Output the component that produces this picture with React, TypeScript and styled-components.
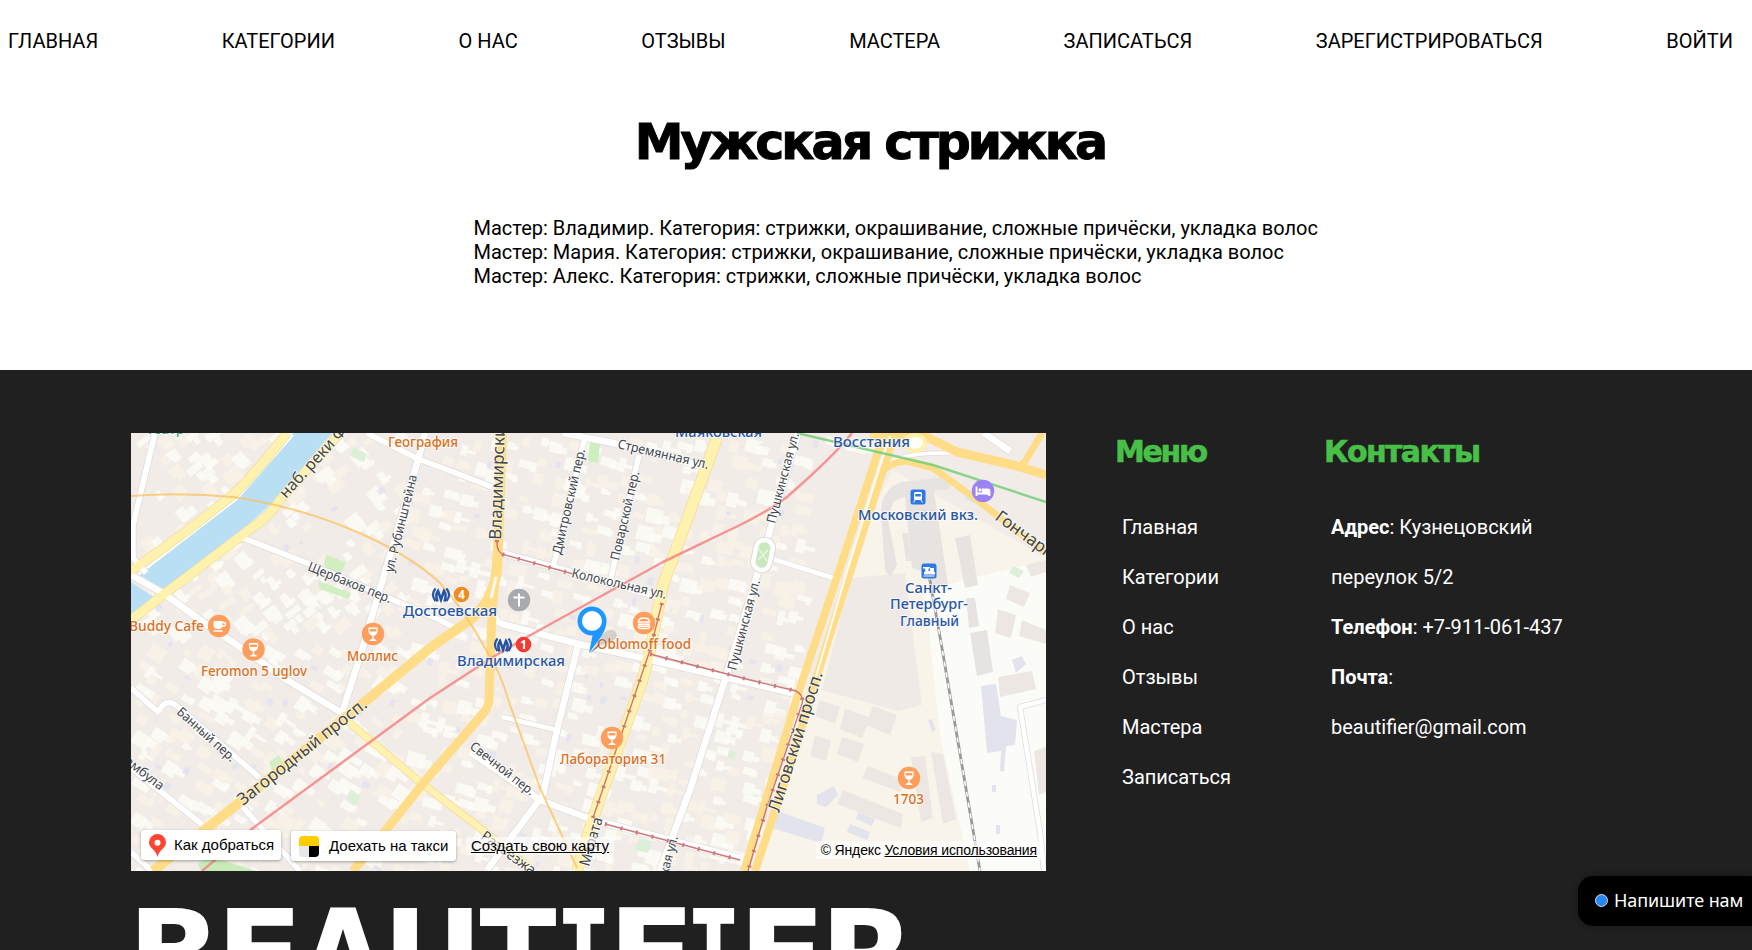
import React from "react";
import styled, { createGlobalStyle } from "styled-components";

const GlobalStyle = createGlobalStyle`
  * { box-sizing: border-box; }
  html, body { margin: 0; padding: 0; }
  body { background: #fff; color: #000; font: 20px/24px Roboto, "Liberation Sans", sans-serif; }
  h1, h2, p, ul { margin: 0; padding: 0; font-weight: inherit; }
  ul { list-style: none; }
  a { color: inherit; text-decoration: none; }
`;

const Page = styled.div`
  height: 950px;
  overflow: hidden;
  display: flex;
  flex-direction: column;
`;

const Nav = styled.nav`
  display: flex;
  justify-content: space-between;
  padding: 29px 19px 0 8px;
  height: 113px;
  flex: none;
  white-space: nowrap;
`;

const Title = styled.h1`
  font-family: "DejaVu Sans", sans-serif;
  font-weight: 700;
  font-size: 49px;
  line-height: 60px;
  letter-spacing: -3px;
  -webkit-text-stroke: 1px #000;
  height: 103px;
  flex: none;
  text-align: center;
  white-space: nowrap;
  padding-right: 12px;
`;

const Masters = styled.ul`
  height: 154px;
  flex: none;
  padding-left: 473.5px;
  white-space: nowrap;
`;

const Footer = styled.footer`
  flex: 1;
  min-height: 0;
  background: #202020;
  color: #fff;
  padding: 63px 131px 0;
`;

const FooterTop = styled.div`
  display: flex;
  align-items: flex-start;
`;

const MapFrame = styled.div`
  position: relative;
  width: 915px;
  height: 438px;
  overflow: hidden;
  flex: none;
  svg { display: block; }
`;

const Column = styled.section<{ $left: number; $width: number }>`
  margin-left: ${(p) => p.$left}px;
  width: ${(p) => p.$width}px;
  flex: none;
`;

const ColumnTitle = styled.h2<{ $spacing: number }>`
  font: 700 30px/38px "DejaVu Sans", sans-serif;
  letter-spacing: ${(p) => p.$spacing}px;
  -webkit-text-stroke: 0.6px #48c048;
  color: #48c048;
  white-space: nowrap;
`;

const ColumnList = styled.ul`
  padding: 31px 0 0 7px;
  line-height: 50px;
  white-space: nowrap;
`;

const Brand = styled.div`
  display: flex;
  margin-top: 13px;
  font: 700 124px/144px "DejaVu Sans", sans-serif;
`;

const BrandLetter = styled.span<{ $w: number; $stretch: number; $slab?: boolean }>`
  width: ${(p) => p.$w}px;
  flex: none;
  display: flex;
  justify-content: center;
  font-family: ${(p) => (p.$slab ? '"DejaVu Sans Mono"' : '"DejaVu Sans"')}, sans-serif;
  transform: scaleX(${(p) => p.$stretch});
`;

const MapBar = styled.div`
  position: absolute;
  left: 10px;
  right: 5px;
  top: 397px;
  display: flex;
  align-items: flex-start;
  color: #000;
  font: 15px/18px "Liberation Sans", Arial, sans-serif;
  white-space: nowrap;
`;

const MapButton = styled.button<{ $w: number; $gap: number; $top: number }>`
  display: flex;
  align-items: center;
  gap: ${(p) => p.$gap}px;
  width: ${(p) => p.$w}px;
  height: 30px;
  margin: ${(p) => p.$top}px 10px 0 0;
  padding: 0 0 0 8px;
  border: 0;
  border-radius: 3px;
  background: #fff;
  color: #000;
  font: inherit;
  box-shadow: 0 1px 3px rgba(0, 0, 0, 0.35);
`;

const MapLink = styled.a`
  && { text-decoration: underline; }
  margin-top: 7px;
  background: rgba(255, 255, 255, 0.6);
  border-radius: 3px;
  padding: 0 5px;
`;

const Copyright = styled.div`
  margin-left: auto;
  margin-top: 11px;
  padding: 0 4px 0 5px;
  font-size: 14px;
  letter-spacing: -0.14px;
  background: rgba(255, 255, 255, 0.7);
  border-radius: 3px;
  a { text-decoration: underline; }
`;

const Chat = styled.button`
  position: absolute;
  left: 1578px;
  top: 876px;
  width: 174px;
  height: 50px;
  display: flex;
  align-items: center;
  gap: 6px;
  padding: 0 0 2px 17px;
  border: 0;
  border-radius: 15px 0 0 15px;
  background: #000;
  color: #fff;
  font: 18px/24px "Noto Sans", sans-serif;
  letter-spacing: -0.1px;
  box-shadow: 0 0 8px rgba(0, 0, 0, 0.3);
  white-space: nowrap;
`;

const Dot = styled.span`
  width: 13px;
  height: 13px;
  border-radius: 50%;
  border: 1px solid #d8d8d8;
  background: #2787f5;
  flex: none;
`;

const NAV = ["ГЛАВНАЯ", "КАТЕГОРИИ", "О НАС", "ОТЗЫВЫ", "МАСТЕРА", "ЗАПИСАТЬСЯ", "ЗАРЕГИСТРИРОВАТЬСЯ", "ВОЙТИ"];
const MENU = ["Главная", "Категории", "О нас", "Отзывы", "Мастера", "Записаться"];
const MASTERS = [
  "Мастер: Владимир. Категория: стрижки, окрашивание, сложные причёски, укладка волос",
  "Мастер: Мария. Категория: стрижки, окрашивание, сложные причёски, укладка волос",
  "Мастер: Алекс. Категория: стрижки, сложные причёски, укладка волос",
];
/* letter, box width, horizontal stretch, slab serif */
const BRAND: [string, number, number, boolean?][] = [
  ["B", 86, 0.98], ["E", 85, 1.04], ["A", 82, 0.9], ["U", 97, 1], ["T", 74, 0.91],
  ["I", 57, 0.76, true], ["F", 79, 1.04], ["I", 45, 0.76, true], ["E", 92, 1.04], ["R", 79, 1],
];

/* Small building footprints and courtyards, laid out along the street grid. */
type Block = { x: number; y: number; w: number; h: number; r: number; c: string };
const BLOCKS: Block[] = (() => {
  let s = 17;
  const rnd = () => ((s = (s * 16807) % 2147483647) / 2147483647);
  const out: Block[] = [];
  for (let y = 436; y < 872; y += 17) {
    for (let x = 134; x < 890; x += 16) {
      const k = rnd();
      const px = x + rnd() * 9;
      const py = y + rnd() * 9;
      if (px > 800 && py > 450 && py < 720) continue;
      const r = px < 400 ? (py < 640 ? -38 : 33) : 14;
      const c = k < 0.38 ? "#fbfbf6" : k < 0.74 ? "#f8f2e6" : k < 0.81 ? "#e3e3ee" : "#f0ebe8";
      const small = k >= 0.74;
      const w = small ? 3 + rnd() * 5 : 6 + rnd() * 12;
      const h = small ? 3 + rnd() * 5 : 5 + rnd() * 10;
      out.push({ x: px, y: py, w, h, r, c });
      if (k < 0.5) out.push({ x: px + w * 0.6, y: py + h * 0.5, w: h * 0.9, h: w * 0.5, r, c });
    }
  }
  return out;
})();

const WHITE: [string, number][] = [
  ["M131 575L163 593L203 622L240 647L287 680L342 713", 7],
  ["M243 538L307 563L440 620L455 628", 6],
  ["M425 433L418 460L362 650L342 713", 7],
  ["M367 433L418 459L440 467L492 487", 6],
  ["M155 433L133 525L133 558L146 573", 6],
  ["M563 433L613 443L710 468", 7],
  ["M585 437L553 568", 6],
  ["M639 455L610 582", 6],
  ["M502 553L663 598", 7],
  ["M493 600Q493 621 502 624L583 645L643 658L750 683L800 695", 7],
  ["M578 645L557 730L543 795L487 870", 7],
  ["M502 717L557 730", 5],
  ["M470 752L540 800L593 820L740 858", 7],
  ["M798 433L757 575L725 680L690 790L660 870", 7],
  ["M770 558L833 578", 5],
  ["M1046 700L1020 707L1040 832L1044 871", 5],
  ["M131 688L158 712L164 704Q170 700 178 707L260 778", 6],
  ["M240 804L300 871", 6],
  ["M131 768L203 825", 6],
  ["M131 852L152 871", 6],
  ["M984 433L1010 451", 7],
  ["M890 462Q910 452 950 453", 4],
];
const YELLOW: [string, number][] = [
  ["M287 433Q260 468 235 493Q190 530 131 571", 9],
  ["M340 433L280 500Q268 518 253 527L163 595L131 620", 9],
  ["M717 438L663 585L650 650L643 678L593 818L577 871", 11],
  ["M345 719L420 782L480 828L530 868", 7],
];
const ORANGE: [string, number][] = [
  ["M502 433L498 548L497 572Q491 603 470 620L430 648L367 700L240 802L153 871", 10],
  ["M498 548L492 612L489 700Q489 708 480 717L430 775L353 871", 9],
  ["M887 433L878 452L840 568L800 688L744 871", 8],
  ["M894 433L887 458L862 535L825 650L787 775L755 871", 8],
  ["M870 436L927 437L957 452L1013 465L1046 475", 9],
  ["M1020 466L1026 460L1042 433", 7],
  ["M878 477Q887 462 907 461L933 468L973 497L1046 553", 7],
];
const TRAM = [
  "M497 540Q496 553 505 555L573 574",
  "M662 603L650 650L593 818M650 654L750 680L796 691Q804 695 802 704L766 810L748 871",
  "M605 824L740 860",
];

const GRAY = "#41474d";
const BLUE = "#2857a6";
const BROWN = "#d9711f";
type Label = [string, number, number, number, string, number, number?];
const LABELS: Label[] = [
  ["Театр", 146, 434, 14, "#3aa88e", 0],
  ["География", 388, 447, 14, BROWN, 0, 70],
  ["наб. реки Фонтанки", 286, 499, 16, GRAY, -47.5],
  ["ул. Рубинштейна", 393, 573, 13, GRAY, -76, 100],
  ["Щербаков пер.", 307, 570, 13, GRAY, 22, 89],
  ["Владимирский", 501, 540, 17, GRAY, -88],
  ["Дмитровский пер.", 561, 555, 13, GRAY, -77, 108],
  ["Поварской пер.", 619, 561, 13, GRAY, -77, 91],
  ["Стремянная ул.", 617, 448, 13, GRAY, 13, 93],
  ["Колокольная ул.", 571, 577, 13, GRAY, 13, 97],
  ["Пушкинская ул.", 775, 524, 13, GRAY, -75, 93],
  ["Пушкинская ул.", 736, 671, 13, GRAY, -75, 93],
  ["Пушкинская ул.", 654, 927, 13, GRAY, -75, 93],
  ["Маяковская", 675, 437, 14, BLUE, 0, 87],
  ["Восстания", 833, 447, 14, BLUE, 0, 77],
  ["Московский вкз.", 858, 519.5, 14, BLUE, 0, 120],
  ["Санкт-", 905, 593, 14, BLUE, 0, 47],
  ["Петербург-", 890, 609, 14, BLUE, 0, 78],
  ["Главный", 900, 625.5, 14, BLUE, 0, 59],
  ["Гончарная", 994, 519, 17, GRAY, 36],
  ["Достоевская", 403, 615.5, 14, BLUE, 0, 94],
  ["Владимирская", 457, 665.5, 14, BLUE, 0, 108],
  ["Buddy Cafe", 129, 630.5, 14, BROWN, 0, 75],
  ["Feromon 5 uglov", 201, 675.5, 14, BROWN, 0, 106],
  ["Моллис", 347, 660.5, 14, BROWN, 0, 51],
  ["Oblomoff food", 597, 649, 14, BROWN, 0, 94],
  ["Лаборатория 31", 560, 763.5, 14, BROWN, 0, 106],
  ["1703", 893, 804, 14, BROWN, 0, 31],
  ["Банный пер.", 176, 713, 13, GRAY, 42, 74],
  ["Джамбула", 109, 751, 13, GRAY, 38],
  ["Загородный просп.", 243, 806, 17, GRAY, -38.5, 160],
  ["Свечной пер.", 469, 748, 13, GRAY, 38, 78],
  ["Разъезжая ул.", 480, 838, 14, GRAY, 36],
  ["Марата", 589, 867, 15, GRAY, -74, 50],
  ["Лиговский просп.", 779, 813, 17, GRAY, -72.5, 146],
];

const Glass = () => (
  <g fill="#fff">
    <path d="M-4.500-6.500h9q1 7.500-3.800 8.200V4.800L3.400 6v1h-6.800V6L-.7 4.800V1.700Q-5.500 1-4.500-6.500z" />
    <path d="M-3.300-5h6.600l.1 2.500h-6.800z" fill="#fe9e5c" />
  </g>
);
const Cup = () => (
  <g fill="none" stroke="#fff">
    <path d="M-5-4.500h8v4q0 3-3 3h-2q-3 0-3-3z" fill="#fff" />
    <path d="M3-3.500h1.500q2 0 2 1.800T4.300 0H3" strokeWidth="1.300" />
    <path d="M-5.500 5h9" strokeWidth="1.500" />
  </g>
);
const Burger = () => (
  <g fill="none" stroke="#fff" strokeWidth="1.500">
    <path d="M-5.500-1q0-4 5.500-4t5.500 4z" />
    <path d="M-6 1.300h12M-5.500 3.200q0 2.300 2 2.300h7q2 0 2-2.300z" />
  </g>
);
const Metro = () => (
  <g fill="none" stroke="#2354a5">
    <path d="M-5.500-6.500q-5 6 0 12.500M5.500-6.500q5 6 0 12.500" strokeWidth="2.200" />
    <path d="M-3.500 6.500q-2.500-6.500.5-10.500L0 4.500l3-8.500q3 4 .5 10.500" strokeWidth="2.600" />
  </g>
);

const CityMap = () => (
  <svg width="915" height="438" viewBox="131 433 915 438" fontFamily='"Noto Sans", sans-serif'>
    <rect x="131" y="433" width="915" height="438" fill="#f1ece8" />
    {BLOCKS.map((b, i) => (
      <rect key={i} x={b.x} y={b.y} width={b.w} height={b.h} fill={b.c} opacity="0.85" transform={`rotate(${b.r} ${b.x} ${b.y})`} />
    ))}
    <path d="M892 470L1046 558V871H752L830 645L870 520z" fill="#f9f4e9" />
    <path d="M850 578L905 573L922 705L898 711L822 690L835 640z" fill="#efeae6" />
    <path d="M925 590L1046 560V871H970L940 735z" fill="#fbfcf7" />
    <g fill="#e7e3e0">
      <path d="M881 512Q882 487 903 482L945 477L953 482L947 490L934 490L948 585L931 585L928 573L912 568L905 497L893 502L888 520L897 565L890 577L885 570z" />
      <path d="M955 538L970 535L978 585L965 588z" />
      <path d="M966 598L975 598L979 626L969 628zM970 633L987 630L993 672L977 676z" />
      <path d="M902 533h6l4 28h-6z" />
    </g>
    <g fill="#ede7e4">
      <path d="M1010 585l20 8-6 14-18-8zM998 609l18 6-5 23-16-5zM1022 620l24 10v14l-27-8zM1026 565l20-5v12l-15 5zM998 677l34-6 4 18-36 8z" />
      <path d="M931 752l12 2 13 65-13 5zM911 757l14-1 8 62-12 4zM868 766l35 14-2 12-39-14zM843 790l60 24-2 14-64-24z" />
      <path d="M820 700l20 7-5 17-20-8zM845 708l25 10-8 20-22-9zM873 706l24 9-7 20-24-10zM815 735l16 6-5 20-16-5zM842 737l22 7-6 18-21-8zM1034 751l12-4v45l-7 3z" />
    </g>
    <g fill="#e2e3ed">
      <path d="M981 686l15-2 5 32 16 4-2 25-9 1-2 26-4-1 1-20-14 2zM817 795l17-9 4 9-12 12-9-3zM858 812l17 7-3 7-16-7zM850 824l20 8-3 8-20-8z" />
      <path d="M775 810l50 18-4 15-49-15zM1012 660l10-4 4 8-10 9zM968 490l12 6-5 8-10-5z" />
      <path d="M928 720l4 12 4-2-4-11zM992 785h4v7h-4zM996 825h4v9h-4z" />
    </g>
    <path d="M1013 566l11 5-5 7-10-5z" fill="#dcefd8" />
    <path d="M326 555l20 7-7 16-17-5zM319 581l32 12-2 6-30-10z" fill="#d3efc1" />
    <path d="M590 440l10 3-2 20-10-2z" fill="#cdeebd" />
    <path d="M353 447l14 7-3 8-14-6z" fill="#dcefd8" />
    <path d="M269 762l10-7 5 9-12 7z" fill="#d3efc1" />
    <path d="M351 789l10 8-7 9-8-8zM640 839l12 3-4 11-14-3zM729 750l7 2-2 8-7-2z" fill="#dcefd8" />
    <path d="M198 864l10-8 48 15h-55z" fill="#c9ebba" />
    <path d="M293 433L237 498L140 575L163 590L248 525L273 502L332 433zM131 582L155 598L131 616z" fill="#b9dff5" />
    <path d="M293 435L237 499L139 574M155 599L165 591" stroke="#fff" strokeWidth="2" fill="none" />
    <g fill="none" strokeLinejoin="round">
      {WHITE.map(([d, w], i) => <path key={`we${i}`} d={d} stroke="#dedcda" strokeWidth={w + 1} />)}
      {YELLOW.map(([d, w], i) => <path key={`ye${i}`} d={d} stroke="#f3dca0" strokeWidth={w + 1} />)}
      {WHITE.map(([d, w], i) => <path key={`w${i}`} d={d} stroke="#fff" strokeWidth={w - 0.5} />)}
      {YELLOW.map(([d, w], i) => <path key={`y${i}`} d={d} stroke="#fff1ae" strokeWidth={w - 0.5} />)}
      {ORANGE.map(([d, w], i) => <path key={`o${i}`} d={d} stroke="#ffdd88" strokeWidth={w} />)}
      <path d="M890 436L878 472L845 578L815 680" stroke="#fffdf2" strokeWidth="2" />
      <path d="M496 577L491 598" stroke="#fffaf0" strokeWidth="3" />
      <path d="M131 496Q180 492 233 497Q300 507 357 532Q410 555 440 583Q463 608 485 648Q500 670 510 705L540 788L577 868" stroke="#fbc25e" strokeWidth="2" opacity="0.75" />
      <path d="M852 433Q835 455 787 497Q770 510 740 525L663 562L527 637L493 657L430 698L253 828L202 871" stroke="#f48584" strokeWidth="2.500" opacity="0.85" />
      <path d="M797 433L933 465L1046 502" stroke="#77cf78" strokeWidth="2.400" opacity="0.85" />
      {TRAM.map((d, i) => (
        <g key={i} stroke="#c66265" opacity="0.85">
          <path d={d} strokeWidth="1.400" />
          <path d={d} strokeWidth="4" strokeDasharray="2 14" />
        </g>
      ))}
      <path d="M929 575L942 648L980 871" stroke="#999" strokeWidth="2.800" />
      <path d="M929 575L942 648L980 871" stroke="#fff" strokeWidth="1.500" strokeDasharray="5 6" />
    </g>
    <rect x="752" y="537" width="22" height="36" rx="11" fill="#fff" stroke="#dcdad7" transform="rotate(12 763 555)" />
    <rect x="757" y="542" width="12" height="26" rx="6" fill="#c9e9bd" transform="rotate(12 763 555)" />
    <path d="M759 549l8 12M768 550l-10 10" stroke="#eef8e8" strokeWidth="1.200" />
    <ellipse cx="915" cy="443" rx="10" ry="8" fill="#fffdf5" stroke="#fff0ab" strokeWidth="4" />
    {LABELS.map(([t, x, y, size, color, rot, len], i) => (
      <text
        key={i}
        x={x}
        y={y}
        fontSize={size}
        fill={color}
        stroke="#fff"
        strokeOpacity="0.65"
        strokeWidth="2"
        strokeLinejoin="round"
        paintOrder="stroke"
        fontWeight={color === GRAY ? 400 : 500}
        textLength={len}
        lengthAdjust="spacingAndGlyphs"
        transform={rot ? `rotate(${rot} ${x} ${y})` : undefined}
      >
        {t}
      </text>
    ))}
    {[[253.5, 649.5], [373, 634], [612, 738], [909, 778]].map(([x, y]) => (
      <g key={x} transform={`translate(${x} ${y})`}>
        <circle r="11.200" fill="#fe9e5c" />
        <Glass />
      </g>
    ))}
    <g transform="translate(219 626)"><circle r="11.200" fill="#fe9e5c" /><Cup /></g>
    <g transform="translate(644 623)"><circle r="11.200" fill="#fe9e5c" /><Burger /></g>
    <g transform="translate(983 491)">
      <circle r="11.200" fill="#9b83f2" />
      <path d="M-6.500-4.500V5M-6.500 2.500h13M6.500 5V0q0-1.500-1.500-1.500h-5v3" stroke="#fff" strokeWidth="1.800" fill="#fff" />
      <circle cx="-3" cy="-1" r="1.700" fill="#fff" />
    </g>
    <g transform="translate(519 600)">
      <circle r="11.200" fill="#a7abb0" />
      <path d="M0-6.500V6.500M-5.500-2.500H5.500" stroke="#fff" strokeWidth="2" />
    </g>
    <g transform="translate(441 595)"><Metro /></g>
    <g transform="translate(503 645)"><Metro /></g>
    <circle cx="461.500" cy="594.500" r="7.800" fill="#ee8b22" />
    <circle cx="523.500" cy="644.500" r="7.800" fill="#f03a35" />
    <g fill="#fff" fontSize="11.500" fontWeight="700" textAnchor="middle">
      <text x="461.500" y="598.700">4</text>
      <text x="523.500" y="648.700">1</text>
    </g>
    <g transform="translate(918 497)">
      <rect x="-7.500" y="-7.500" width="15" height="15" rx="2.500" fill="#2e78e4" />
      <rect x="-4" y="-5" width="8" height="8" rx="1.500" fill="#fff" />
      <path d="M-2.800-3h5.600v2.500h-5.600z" fill="#2e78e4" />
      <path d="M-3 3l-1.500 2.500M3 3l1.500 2.500" stroke="#fff" />
    </g>
    <g transform="translate(929 571)">
      <rect x="-7.500" y="-7.500" width="15" height="15" rx="2.500" fill="#2e78e4" />
      <path d="M-6-4h7v1.500h-1.500V0h1.500v-3h4V1H6v2.500H-5V1h1.200v-3.500H-6z" fill="#fff" />
      <path d="M-5.500 5h11" stroke="#fff" />
    </g>
    <path d="M590 653L605 632Q615 626 617 636Q614 642 600 645z" fill="#555" opacity="0.2" />
    <path d="M590 653L600 643L597 648z" fill="#333" opacity="0.7" />
    <path d="M589 653L592.500 635.500A14.500 14.500 0 1 1 606.500 622Q606 630 599.500 639z" fill="#1e98ff" />
    <circle cx="592" cy="621" r="10" fill="#fff" />
  </svg>
);

const PinIcon = () => (
  <svg width="17" height="23" viewBox="0 0 17 23">
    <path d="M8.500 0a8.500 8.500 0 0 1 8.500 8.500c0 5-5 6.500-7.500 11.500L8.500 23l-1-3C5 15 0 13.500 0 8.500A8.500 8.500 0 0 1 8.500 0z" fill="#ff4433" />
    <circle cx="8.500" cy="8.800" r="3" fill="#fff" />
  </svg>
);
const TaxiIcon = () => (
  <svg width="20" height="21" viewBox="0 0 20 21">
    <path d="M4 0h12q4 0 4 4v6H0V4q0-4 4-4z" fill="#fc0" />
    <path d="M0 10h10v11H4q-4 0-4-4z" fill="#e8e8e8" />
    <path d="M10 10h10v7q0 4-4 4h-6z" fill="#000" />
  </svg>
);

export default function App() {
  return (
    <Page>
      <GlobalStyle />
      <Nav>{NAV.map((t) => <a href="#" key={t}>{t}</a>)}</Nav>
      <Title>Мужская стрижка</Title>
      <Masters>{MASTERS.map((t) => <li key={t}>{t}</li>)}</Masters>
      <Footer>
        <FooterTop>
          <MapFrame>
            <CityMap />
            <MapBar>
              <MapButton $w={140} $gap={8} $top={0}><PinIcon />Как добраться</MapButton>
              <MapButton $w={165} $gap={10} $top={1}><TaxiIcon />Доехать на такси</MapButton>
              <MapLink href="#">Создать свою карту</MapLink>
              <Copyright>© Яндекс <a href="#">Условия использования</a></Copyright>
            </MapBar>
          </MapFrame>
          <Column $left={69} $width={209}>
            <ColumnTitle $spacing={-2.3}>Меню</ColumnTitle>
            <ColumnList>{MENU.map((t) => <li key={t}><a href="#">{t}</a></li>)}</ColumnList>
          </Column>
          <Column $left={0} $width={250}>
            <ColumnTitle $spacing={-1.6}>Контакты</ColumnTitle>
            <ColumnList>
              <li><b>Адрес</b>: Кузнецовский</li>
              <li>переулок 5/2</li>
              <li><b>Телефон</b>: +7-911-061-437</li>
              <li><b>Почта</b>:</li>
              <li>beautifier@gmail.com</li>
            </ColumnList>
          </Column>
        </FooterTop>
        <Brand>
          {BRAND.map(([c, w, stretch, slab], i) => (
            <BrandLetter key={i} $w={w} $stretch={stretch} $slab={slab}>{c}</BrandLetter>
          ))}
        </Brand>
      </Footer>
      <Chat><Dot />Напишите нам</Chat>
    </Page>
  );
}
